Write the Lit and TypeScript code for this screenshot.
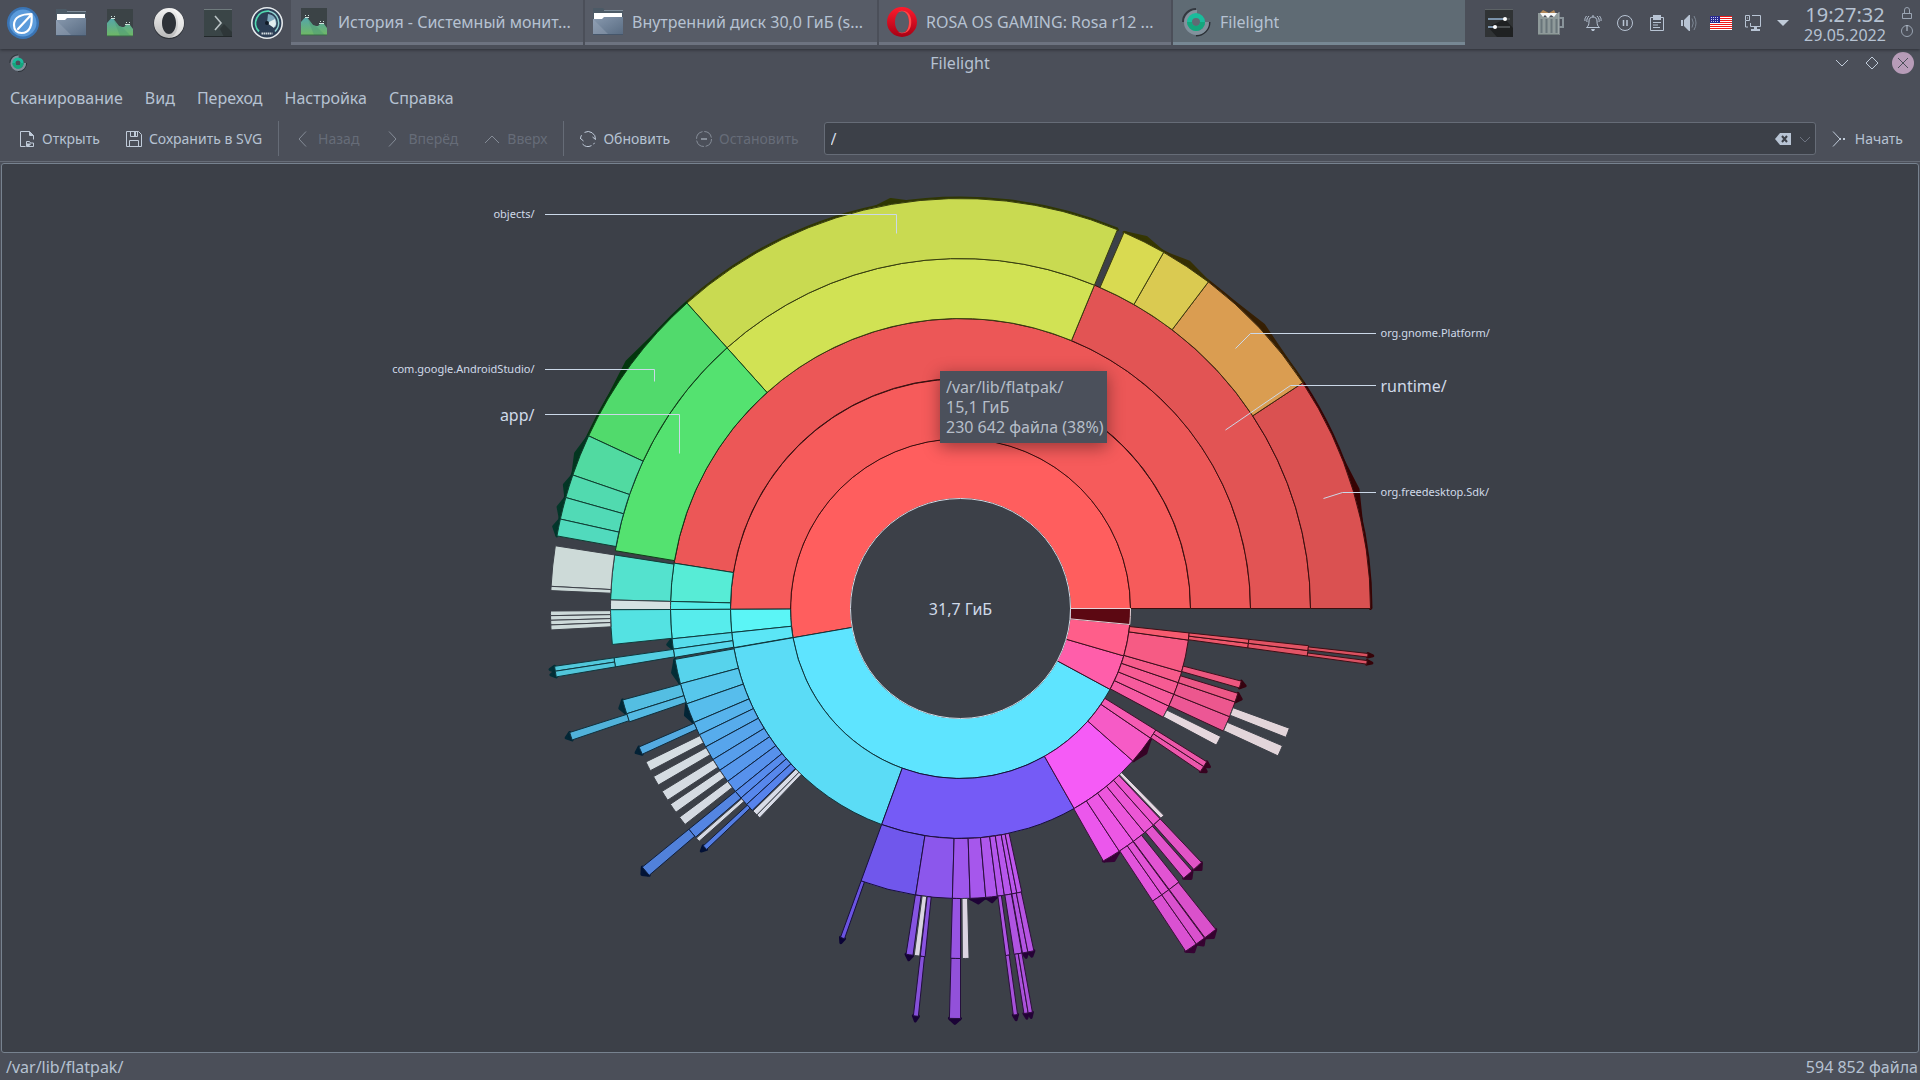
import { LitElement, html, svg, css, type TemplateResult } from "lit";
import { customElement } from "lit/decorators.js";

/* ------------------------------------------------------------------ icons */

const monitorIcon = svg`
  <defs><linearGradient id="hill" x1="0" y1="0" x2="0" y2="1"><stop offset="0" stop-color="#55a5a8"/><stop offset="1" stop-color="#6fb865"/></linearGradient></defs>
  <rect x="3" y="2" width="26" height="27" fill="#3b4346"/>
  <path d="M3 16 6.500 12h3L15 19l3 1h2l2-2h4l3 4v7H3Z" fill="url(#hill)"/>
  <path d="M9.500 12 15 19l3 1 9 9H16Z" fill="#4d9a76" opacity=".5"/>
  <path d="M7 9h1v1H7zM10 9h1v1h-1zM7 11h4v1H7zM22 15h1v1h-1zM25 15h1v1h-1zM21 17h5v1h-5z" fill="#cfe3dc"/>
  <path d="M3 29h26" stroke="#3b6a48"/>`;

const folderIcon = svg`
  <defs><linearGradient id="fold" x1="0" y1="0" x2="1" y2="1"><stop offset="0" stop-color="#8899ae"/><stop offset="1" stop-color="#586b82"/></linearGradient></defs>
  <path d="M1 2h10l2 2h18v10H1Z" fill="#4c5a66"/>
  <path d="M12 4.500h19" stroke="#7e8c99"/>
  <path d="M2 7h28v12H2Z" fill="#fff"/>
  <path d="M1 13h9l2-2h19v18H1Z" fill="url(#fold)"/>
  <path d="M1 13 17 29H1Z" fill="#a3b0c0" opacity=".35"/>
  <path d="M1 28.500h30" stroke="#46566a"/>`;

const ringIcon = svg`
  <path d="M16 3a13 13 0 0 0-13 13" fill="none" stroke="#33383f" stroke-width="2"/>
  <path d="M29 16a13 13 0 0 1-13 13" fill="none" stroke="#2a2f35" stroke-width="3"/>
  <path d="M17 6A10.500 10.500 0 1 0 27 16" fill="none" stroke="#82919c" stroke-width="4"/>
  <circle cx="16" cy="16" r="6.500" fill="none" stroke="#1abc9c" stroke-width="5"/>
  <path d="M9.500 16a6.500 6.500 0 0 0 13 0" fill="none" stroke="#14a67c" stroke-width="5"/>`;

const operaIcon = (outer: string, inner: string, id: string) => svg`
  <defs><linearGradient id=${id} x1="0" y1="0" x2="0" y2="1"><stop offset="0" stop-color=${outer}/><stop offset="1" stop-color=${inner}/></linearGradient></defs>
  <path fill-rule="evenodd" fill="url(#${id})" d="M16 1a15 15 0 1 0 0 30 15 15 0 0 0 0-30Zm0 4c4 0 7 5 7 11s-3 11-7 11-7-5-7-11 3-11 7-11Z"/>`;

const launchers: { name: string; art: TemplateResult }[] = [
  { name: "Меню приложений", art: svg`
      <circle cx="16" cy="16" r="16" fill="#3a74b4"/><circle cx="16" cy="16" r="13.500" fill="#5b9bdb"/>
      <path d="M24.500 7C15 7 7 10 7 18c0 5 3 8 7.500 8C23 26 25.500 18 24.500 7ZM11 22 24 8" fill="none" stroke="#fff" stroke-width="2.200" stroke-linejoin="round" stroke-linecap="round"/>` },
  { name: "Файлы", art: folderIcon },
  { name: "Системный монитор", art: monitorIcon },
  { name: "Opera", art: svg`<circle cx="16" cy="16.500" r="15.500" fill="#2e3238"/>${operaIcon("#f2f2f2", "#b9b9b9", "op-w")}
      <path d="M16 1a15 15 0 0 1 0 30c5-1 9-6 9-15S21 2 16 1Z" fill="#fff" opacity=".45"/>` },
  { name: "Терминал", art: svg`
      <rect x="2" y="2" width="28" height="28" fill="#3a4547"/><path d="M18 22 22 17 30 25v5H22Z" fill="#2a3032" opacity=".7"/>
      <path d="M2 2.500h28" stroke="#6f7b7d"/><path d="M2 29.500h28" stroke="#22282a"/>
      <path d="m13 9 6 7-6 7" fill="none" stroke="#b9c2c4" stroke-width="1.600"/>` },
  { name: "Stacer", art: svg`
      <circle cx="16" cy="16" r="15.200" fill="#2c3e55" stroke="#e6eaec" stroke-width="1.600"/>
      <path d="M8 24.500A12 12 0 0 1 18 4.200" fill="none" stroke="#52d8b0" stroke-width="1.800"/>
      <path d="M18 4.200A12 12 0 0 1 24 24.500" fill="none" stroke="#8fd0d0" stroke-width="1.500"/>
      <path d="M16 16 17 7a9 9 0 0 1 7.500 13Z" fill="#7fa9bd"/><path d="M16 16l8-4 1 5-2 4Z" fill="#e2eef0"/>
      <circle cx="16" cy="16" r="2" fill="#101a26"/><path d="M10.500 26.500h11" stroke="#cfd8dc" stroke-width="1.800" stroke-dasharray="1.500 .5"/>` },
];

const tasks: { title: string; art: TemplateResult; active?: boolean }[] = [
  { title: "История - Системный монит...", art: monitorIcon },
  { title: "Внутренний диск 30,0 ГиБ (s...", art: folderIcon },
  { title: "ROSA OS GAMING: Rosa r12 ...", art: svg`${operaIcon("#ff1b2d", "#a70014", "op-r")}
      <path d="M12 6c3-2 8-2 11 2s3 12 0 16-8 4-11 2c8 3 11-3 11-10S20 3 12 6Z" fill="#ff4b4b"/>` },
  { title: "Filelight", art: ringIcon, active: true },
];

const tray: { name: string; art: TemplateResult }[] = [
  { name: "Уведомления", art: svg`<path d="M1.500 12.500h13c-2-1.500-2.500-3-2.500-6.500C12 3.500 10.500 2 8 2S4 3.500 4 6c0 3.500-.5 5-2.500 6.500ZM8 0v2M2 7c-.5-2 0-4 2-6M14 7c.5-2 0-4-2-6M0 6c-.3-2 0-3 1.500-5M16 6c.3-2 0-3-1.500-5" fill="none" stroke="#b8c4d4"/><path d="M6 14h4l-1 2H7Z" fill="#b8c4d4"/>` },
  { name: "Пауза", art: svg`<circle cx="8" cy="8" r="7.500" fill="none" stroke="#b8c4d4"/><path d="M6.500 5v6M10 5v6" stroke="#b8c4d4" stroke-width="1.500"/>` },
  { name: "Буфер обмена", art: svg`<path d="M1.500 2.500h13v13h-13Z" fill="none" stroke="#b8c4d4"/><path d="M4 0h8v5H4ZM4 7h8v1H4ZM4 9.500h5v1H4ZM4 12h7v1H4Z" fill="#b8c4d4"/>` },
  { name: "Громкость", art: svg`<path d="M0 5h2v6H0ZM3 5l5-5h1v16H8l-5-5Z" fill="#b8c4d4"/><path d="M11 3.500q2.500 4.500 0 9M13 1q4 7 0 14" fill="none" stroke="#7d8794"/>` },
];

const usFlag = svg`
  <rect width="22" height="14" fill="#fff"/>
  <path d="M0 .5h22M0 2.500h22M0 4.500h22M0 6.500h22M0 8.500h22M0 10.500h22M0 12.500h22" stroke="#f01818"/>
  <rect width="10" height="7" fill="#2a2a90"/>
  <path d="M1 1.500h8M1 3.500h8M1 5.500h8" stroke="#c9cdf0" stroke-dasharray="1 1"/>`;

/* ------------------------------------------------------------- disk usage */

/** ring index, start angle, end angle (degrees, counter-clockwise from east), kind */
type Slice = [number, number, number, ("hidden" | "file" | "focus")?];

const slices: Slice[] = [
  // ring 0
  [0, 0, 189.9], [0, 189.9, 331.6], [0, 331.6, 343.8], [0, 343.8, 354.6],
  // ring 1
  [1, 0, 180.2], [1, 180.2, 186], [1, 186, 189.8], [1, 189.9, 249.95], [1, 249.95, 299.6],
  [1, 299.6, 318.5], [1, 318.5, 325.7, "hidden"], [1, 325.7, 328.1],
  [1, 331.8, 334.9], [1, 334.9, 338.1], [1, 338.1, 341.2], [1, 341.2, 344], [1, 344, 352.1], [1, 352.1, 353.9],
  // ring 2
  [2, 0, 171], [2, 171, 178.6], [2, 178.6, 180.2], [2, 180.2, 186], [2, 186, 188.05, "hidden"], [2, 188.05, 189.7],
  [2, 190.1, 195.05, "hidden"], [2, 195.05, 199.2], [2, 199.2, 203.15, "hidden"], [2, 203.15, 205.8],
  [2, 205.8, 208.5], [2, 208.5, 211.4], [2, 211.4, 213.9], [2, 213.9, 216.6], [2, 216.6, 219.1],
  [2, 219.1, 220.8], [2, 220.8, 222.5], [2, 222.5, 224.1], [2, 224.3, 225.4, "file"], [2, 225.4, 226.2, "file"],
  [2, 249.95, 261.1], [2, 261.1, 268.4], [2, 268.4, 271.9], [2, 271.9, 275, "hidden"], [2, 275, 277.3, "hidden"],
  [2, 277.3, 278.7], [2, 278.7, 280.2], [2, 280.2, 281.2], [2, 281.2, 282.2],
  [2, 299.5, 303.2, "hidden"], [2, 303.2, 306.6], [2, 306.6, 309.4], [2, 309.4, 311.7], [2, 311.7, 313.5],
  [2, 313.7, 314.5, "file"], [2, 325.8, 327, "hidden"], [2, 327, 328.1, "hidden"],
  [2, 331.9, 333.8, "file"], [2, 335, 338.1], [2, 338.1, 341.2], [2, 341.2, 343, "hidden"],
  [2, 344.1, 345.5, "hidden"], [2, 352.2, 353.1], [2, 353.1, 353.9],
  // ring 3
  [3, 0, 67.5], [3, 67.5, 131.85], [3, 131.85, 170.5], [3, 171.2, 178.6], [3, 178.6, 180.2, "file"], [3, 180.2, 185.9],
  [3, 188.1, 189.6], [3, 195.15, 197.5, "hidden"], [3, 197.5, 198.9], [3, 203.3, 204.6, "hidden"],
  [3, 206, 207.6, "file"], [3, 208.7, 210.3, "file"], [3, 211.5, 213.2, "file"], [3, 214, 215.6, "file"],
  [3, 216.6, 218.1, "file"], [3, 219.1, 220.8], [3, 221, 221.7, "file"], [3, 222.7, 223.5, "hidden"],
  [3, 249.95, 250.65, "hidden"], [3, 261.05, 262.2, "hidden"], [3, 262.4, 263.3, "file"], [3, 263.4, 264.2],
  [3, 268.4, 270], [3, 270.3, 271.4, "file"], [3, 277.4, 278.1], [3, 278.8, 280.1],
  [3, 280.2, 281.1, "hidden"], [3, 281.1, 282.1, "hidden"], [3, 303.3, 305.1], [3, 305.1, 306.5], [3, 306.6, 308.6],
  [3, 309.6, 311.4, "hidden"], [3, 311.8, 313.5, "hidden"], [3, 335.1, 336.9, "file"], [3, 338.4, 340, "file"],
  [3, 352.2, 353.1], [3, 353.1, 353.9],
  // ring 4
  [4, 0, 33.4, "hidden"], [4, 33.4, 52.8, "hidden"], [4, 52.8, 60.3, "hidden"], [4, 60.3, 66.5, "hidden"],
  [4, 67.5, 131.85, "hidden"], [4, 131.85, 155.1, "hidden"], [4, 155.1, 161, "hidden"], [4, 161, 164.3, "hidden"],
  [4, 164.3, 167.4, "hidden"], [4, 167.4, 169.8, "hidden"], [4, 171.2, 176.9, "file"], [4, 176.9, 177.5, "file"],
  [4, 180.35, 181, "file"], [4, 181, 181.65, "file"], [4, 181.65, 182.3, "file"], [4, 182.3, 183, "file"],
  [4, 188.1, 188.8, "hidden"], [4, 188.8, 189.6, "hidden"], [4, 197.6, 198.7, "hidden"], [4, 219.1, 220.6, "hidden"],
  [4, 263.4, 264.1, "hidden"], [4, 268.45, 270, "hidden"], [4, 277.4, 278, "hidden"], [4, 278.9, 279.5, "hidden"],
  [4, 279.5, 280.1, "hidden"], [4, 303.3, 305.1, "hidden"], [4, 305.1, 306.5, "hidden"], [4, 306.6, 308.5, "hidden"],
  [4, 352.2, 352.7, "hidden"], [4, 353.2, 353.7, "hidden"],
  [0, 354.6, 360, "focus"],
];

const HOLE = 110;
const BAND = 60;
const ringValue = [1, 0.963, 0.926, 0.888, 0.855];

const hsv = (h: number, s: number, v: number): string => {
  const channel = (n: number) => {
    const k = (n + h / 60) % 6;
    return Math.round(255 * (v - v * s * Math.max(0, Math.min(k, 4 - k, 1))));
  };
  return `rgb(${channel(5)},${channel(3)},${channel(1)})`;
};

const polar = (angle: number, radius: number): string => {
  const t = (angle * Math.PI) / 180;
  return `${(radius * Math.cos(t)).toFixed(2)} ${(-radius * Math.sin(t)).toFixed(2)}`;
};

const arcTo = (r: number, from: number, to: number) =>
  `A${r} ${r} 0 ${Math.abs(to - from) > 180 ? 1 : 0} ${to > from ? 0 : 1} ${polar(to, r)}`;

const slicePath = (ring: number, a: number, b: number) => {
  const r = HOLE + ring * BAND;
  const R = r + BAND;
  return `M${polar(a, r)}L${polar(a, R)}${arcTo(R, a, b)}L${polar(b, r)}${arcTo(r, b, a)}Z`;
};

const drawHidden = ([ring, a, b]: Slice) => {
  const R = HOLE + (ring + 1) * BAND;
  const color = hsv(a, 0.95, 0.21);
  return svg`
    <path d="M${polar(a, R)}L${polar((a + b) / 2, R + 5)}L${polar(b, R)}Z" fill=${color} stroke=${color} stroke-width="3" stroke-linejoin="round"/>
    <path d="M${polar(a, R)}${arcTo(R, a, b)}" fill="none" stroke=${color} stroke-width="4"/>`;
};

const drawSlice = ([ring, a, b, kind]: Slice) => {
  const v = ringValue[ring];
  let fill = hsv(a, 0.63, v);
  let stroke = hsv(a, 0.75, 0.24);
  if (kind === "file") {
    fill = hsv(a, 0.06, Math.min(v, 0.9));
    stroke = "#3c4048";
  } else if (kind === "focus") {
    fill = "#5c0812";
    stroke = "#e4d3d8";
  }
  return svg`<path d=${slicePath(ring, a, b)} fill=${fill} stroke=${stroke}/>`;
};

const callouts: { text: string; line: string; x: number; y: number; big?: boolean }[] = [
  { text: "objects/", line: "-415.5,-394 -64,-394 -64,-375", x: -426, y: -391 },
  { text: "com.google.AndroidStudio/", line: "-415.5,-239 -306,-239 -306,-227", x: -426, y: -236 },
  { text: "app/", line: "-415.5,-194 -281,-194 -281,-155", x: -426, y: -188, big: true },
  { text: "org.gnome.Platform/", line: "415.5,-275 290,-275 275,-260", x: 420, y: -272 },
  { text: "runtime/", line: "415.5,-223 330,-223 265,-178.5", x: 420, y: -217, big: true },
  { text: "org.freedesktop.Sdk/", line: "415.5,-116 382,-116 363,-110", x: 420, y: -113 },
];

@customElement("usage-map")
export class UsageMap extends LitElement {
  static styles = css`
    :host { display: block; position: relative; width: 1200px; height: 860px; }
    .map { display: block; width: 1200px; height: 860px; overflow: visible; }
    text { font: 11px "Noto Sans", sans-serif; fill: #d0dae8; }
    .big { font-size: 16px; }
    .total { font-size: 16px; text-anchor: middle; }
    .left { text-anchor: end; }
    .lead { fill: none; stroke: #cbd8e8; }
    .tip {
      position: absolute; left: 580px; top: 193px; width: 167px; box-sizing: border-box;
      padding: 6px 2px 6px 6px; background: #4b505b; color: #b6bec9;
      font: 16px/20px "Noto Sans", sans-serif; box-shadow: 0 4px 16px rgba(0, 0, 0, 0.4);
    }
    .tip p { margin: 0; overflow: hidden; white-space: nowrap; }
  `;

  render() {
    return html`
      <svg class="map" viewBox="-600.5 -430.5 1200 860" role="img" aria-label="/var/lib/flatpak/">
        ${slices.filter((s) => s[3] === "hidden").map(drawHidden)}
        ${slices.map(drawSlice)}
        <circle r=${HOLE} fill="#3c4048" stroke="#d3dbe6"/>
        <path d="M110 0H170" stroke="#e4d3d8"/>
        <text class="total" x="0" y="6">31,7 ГиБ</text>
        ${callouts.map((c) => svg`
          <polyline class="lead" points=${c.line}/>
          <text class="${c.x < 0 ? "left" : ""} ${c.big ? "big" : ""}" x=${c.x} y=${c.y}>${c.text}</text>`)}
      </svg>
      <div class="tip" role="tooltip">
        <p>/var/lib/flatpak/</p>
        <p>15,1 ГиБ</p>
        <p>230 642 файла (38%)</p>
      </div>`;
  }
}

/* ------------------------------------------------------------- the window */

const icon16 = (art: TemplateResult) => html`<svg class="i16" viewBox="0 0 16 16" aria-hidden="true">${art}</svg>`;

const openIcon = svg`<path d="M1.500.5h9l4 4v4M1.500.5v15h5M10.500.5v4h4" fill="none" stroke="#c0cbd9"/><path d="M11 1v3.500h3.500Z" fill="#c0cbd9"/><path d="M7.500 15.500v-5h3l1 1.500h3v3.500ZM7.500 13.500h4" fill="none" stroke="#c0cbd9"/><path d="M8 12.500h4L10 15.500H8Z" fill="#c0cbd9"/>`;
const saveIcon = svg`<path d="M.5.5h12l3 3v12H.5ZM3.500 15.500v-6h9v6M4.500.5v5h7v-5" fill="none" stroke="#c0cbd9"/><path d="M8 1h2v4H8Z" fill="#c0cbd9"/>`;
const backIcon = svg`<path d="M11 .5 4 8l7 7.500" fill="none" stroke="currentColor"/>`;
const forwardIcon = svg`<path d="M4 .5 11 8l-7 7.500" fill="none" stroke="currentColor"/>`;
const upIcon = svg`<path d="M1 12 8 5l7 7" fill="none" stroke="currentColor"/>`;
const refreshIcon = svg`<path d="M4.500 1.400A7.500 7.500 0 0 1 15.500 8.500M15.500 8.500l-3-2.500M1.500 4.200A7.500 7.500 0 0 0 .5 8M.5 7.500l3 2.500M2.500 13A7.500 7.500 0 0 0 11.500 14.600M14.500 11.800l-1 1.500" fill="none" stroke="#c0cbd9"/>`;
const stopIcon = svg`<circle cx="8" cy="8" r="7.500" fill="none" stroke="currentColor" stroke-dasharray="10 1.800"/><path d="M5 8h6" stroke="currentColor" stroke-width="2"/>`;
const goIcon = svg`<path d="M1 .5 8 8l-7 7.500" fill="none" stroke="#c0cbd9"/><path d="M8 7h1v2H8ZM11 7h2v2h-2Z" fill="#c0cbd9"/>`;

@customElement("app-root")
export class AppRoot extends LitElement {
  static styles = css`
    :host {
      display: flex; flex-direction: column; min-height: 100vh; overflow: hidden;
      background: #4b4f59; color: #b6c2d2; font: 16px/20px "Noto Sans", sans-serif;
    }
    button, input { font: inherit; color: inherit; background: none; border: 0; padding: 0; margin: 0; }
    svg { flex: none; display: block; }
    .i16 { width: 16px; height: 16px; overflow: visible; }
    .i32 { width: 32px; height: 32px; }

    .panel { display: flex; height: 49px; box-shadow: 0 1px 3px rgba(30, 33, 39, 0.7); position: relative; }
    .launchers { display: flex; height: 46px; }
    .launcher { display: grid; place-items: center; width: 49px; }
    .launcher:first-child { width: 46px; }
    .tasks { display: flex; flex: 1; gap: 2px; min-width: 0; height: 45px; }
    .task {
      flex: 1 1 0; min-width: 0; display: flex; align-items: center; gap: 8px; padding: 2px 4px 0 7px;
      background: #575c67; border-bottom: 3px solid #6d7380; text-align: left; box-sizing: border-box;
    }
    .task.active { background: #5f6b74; border-color: #778894; }
    .task span { overflow: hidden; text-overflow: ellipsis; white-space: nowrap; }
    .tray { display: flex; height: 46px; padding-left: 8px; }
    .cell { display: grid; place-items: center; width: 32px; }
    .cell.wide { width: 52px; }
    .cell.slim { width: 28px; }
    .flag { width: 22px; height: 14px; }
    .clock { width: 96px; text-align: center; padding-top: 3px; }
    .time { font-size: 20px; line-height: 24px; }
    .date { line-height: 16px; }
    .session { display: flex; flex-direction: column; width: 27px; padding-top: 6px; gap: 4px; align-items: center; }
    .session button { display: block; height: 14px; }
    .i14 { width: 14px; height: 14px; }

    .titlebar { display: grid; grid-template-columns: 1fr auto 1fr; align-items: center; height: 28px; padding: 0 8px; }
    .titlebar h1 { font: inherit; margin: 0; }
    .appicon { width: 20px; height: 20px; }
    .winbtns { display: flex; justify-content: flex-end; align-items: center; gap: 10px; }
    .winbtns button { width: 20px; display: grid; place-items: center; }
    .i22 { width: 22px; height: 22px; }

    .menubar { display: flex; height: 42px; align-items: center; padding-left: 10px; gap: 22px; }

    .toolbar { display: flex; align-items: center; height: 39px; padding: 0 4px 0 6px; font-size: 14px; }
    .tool { display: flex; align-items: center; gap: 7px; padding: 0 13px; height: 34px; white-space: nowrap; }
    .tool:disabled { color: #666c78; }
    .tool:disabled svg { color: #858c97; }
    .sep { width: 1px; height: 35px; margin: 0 3px; background: #666c77; }
    .location {
      flex: 1; display: flex; align-items: center; gap: 9px; height: 33px; box-sizing: border-box; min-width: 0;
      margin: 0 3px 0 12px; padding: 0 5px 0 6px; background: #3c4048; border: 1px solid #666c77; border-radius: 3px;
    }
    .location input { flex: 1; min-width: 0; outline: 0; color: #d3dce8; font-size: 16px; }
    .i10 { width: 10px; height: 10px; }

    .content { flex: 1; display: flex; flex-direction: column; border-top: 1px solid #666c77; margin-top: 3px; padding: 1px 1px 0; }
    .frame {
      flex: 1; display: flex; justify-content: center; align-items: center; background: #3c4048;
      border: 1px solid #77828f; border-radius: 3px;
    }
    .statusbar { display: flex; justify-content: space-between; align-items: center; height: 27px; padding: 0 2px 0 6px; }
  `;

  private tool(art: TemplateResult, label: string, disabled = false) {
    return html`<button class="tool" ?disabled=${disabled}>${icon16(art)}<span>${label}</span></button>`;
  }

  render() {
    return html`
      <header class="panel">
        <nav class="launchers">
          ${launchers.map((l) => html`<button class="launcher" aria-label=${l.name}>
            <svg class="i32" viewBox="0 0 32 32">${l.art}</svg></button>`)}
        </nav>
        <div class="tasks">
          ${tasks.map((t) => html`<button class="task ${t.active ? "active" : ""}">
            <svg class="i32" viewBox="0 0 32 32" aria-hidden="true">${t.art}</svg><span>${t.title}</span></button>`)}
        </div>
        <div class="tray">
          <button class="cell wide" aria-label="Настройки"><svg class="i32" viewBox="0 0 32 32">
            <rect x="2" y="2" width="28" height="28" fill="#303335"/><path d="M2 2.500h28" stroke="#5c6265"/>
            <path d="M5 20 22 12l8 9v9H14Z" fill="#1f2122"/>
            <path d="M5 12h17" stroke="#7b93ab" stroke-width="2"/><path d="M22 12h5M12 20h15" stroke="#4b4f51" stroke-width="2"/>
            <path d="M5 20h7" stroke="#7b93ab" stroke-width="2"/><circle cx="22" cy="12" r="2" fill="#fff"/><circle cx="12" cy="20" r="2" fill="#fff"/></svg></button>
          <button class="cell wide" aria-label="Корзина"><svg class="i32" viewBox="0 0 32 32">
            <path d="M3 6h3l3 4h9l3-4h3v22H3Z" fill="#8f9a9a"/>
            <path d="m5 6 3-3 6 3 5-3 2 4Z" fill="#b38a5b"/><path d="M5 6h17l-3 4-3-2-3 3-3-3-2 2Z" fill="#f6f8f8"/>
            <path d="M6.500 12v14M11.500 12v14M16.500 12v14M21.500 12v14" stroke="#69757a" stroke-width="2"/>
            <path d="M24 5v23" stroke="#aab4b6"/><path d="M24 11h4v9h-4" fill="none" stroke="#89949a" stroke-width="2"/><path d="M3 27.500h21" stroke="#6d7878"/></svg></button>
          ${tray.map((t) => html`<button class="cell" aria-label=${t.name}>${icon16(t.art)}</button>`)}
          <button class="cell" aria-label="Раскладка"><svg class="flag" viewBox="0 0 22 14">${usFlag}</svg></button>
          <button class="cell" aria-label="Сеть">${icon16(svg`<path d="M7 .5h8.500v11H5.500V8M.5.5h4v5h-4ZM2.500 2.500v1M.5 6v6h2.500" fill="none" stroke="#b8c4d4"/><path d="M9 12h3v2h3v2H6v-2h3Z" fill="#b8c4d4"/>`)}</button>
          <button class="cell slim" aria-label="Показать скрытые значки"><svg class="i14" viewBox="0 0 14 14"><path d="M1 4h12L7 10Z" fill="#c0cbd9"/></svg></button>
          <div class="clock"><div class="time">19:27:32</div><div class="date">29.05.2022</div></div>
          <div class="session">
            <button aria-label="Заблокировать"><svg class="i14" viewBox="0 0 14 14"><path d="M2.500 7.500h9v5h-9ZM4.500 7V4a2.500 2.500 0 0 1 5 0v3" fill="none" stroke="#9aa4b2"/></svg></button>
            <button aria-label="Выключить"><svg class="i14" viewBox="0 0 14 14"><circle cx="7" cy="7" r="5.500" fill="none" stroke="#9aa4b2"/><path d="M7 1v6" stroke="#c0cbd9"/></svg></button>
          </div>
        </div>
      </header>

      <div class="titlebar">
        <svg class="appicon" viewBox="0 0 32 32" aria-hidden="true">${ringIcon}</svg>
        <h1>Filelight</h1>
        <div class="winbtns">
          <button aria-label="Свернуть"><svg class="i14" viewBox="0 0 14 14"><path d="m1 4 6 6 6-6" fill="none" stroke="#c0cbd9"/></svg></button>
          <button aria-label="Развернуть"><svg class="i14" viewBox="0 0 14 14"><path d="m7 1 6 6-6 6-6-6Z" fill="none" stroke="#c0cbd9"/></svg></button>
          <button aria-label="Закрыть"><svg class="i22" viewBox="0 0 22 22"><circle cx="11" cy="11" r="11" fill="#b79cb8"/><path d="m6 6 10 10M16 6 6 16" stroke="#4b4f59"/></svg></button>
        </div>
      </div>

      <nav class="menubar">
        ${["Сканирование", "Вид", "Переход", "Настройка", "Справка"].map((m) => html`<button>${m}</button>`)}
      </nav>

      <div class="toolbar">
        ${this.tool(openIcon, "Открыть")} ${this.tool(saveIcon, "Сохранить в SVG")}
        <span class="sep"></span>
        ${this.tool(backIcon, "Назад", true)} ${this.tool(forwardIcon, "Вперёд", true)} ${this.tool(upIcon, "Вверх", true)}
        <span class="sep"></span>
        ${this.tool(refreshIcon, "Обновить")} ${this.tool(stopIcon, "Остановить", true)}
        <div class="location">
          <input type="text" aria-label="Адрес" .value=${"/"}>
          <button aria-label="Очистить"><svg class="i16" viewBox="0 0 16 16"><path d="M5 2h11v12H5L0 8Z" fill="#b8c4d4"/><path d="m7 5 5 6M12 5l-5 6" stroke="#3c4048" stroke-width="2"/></svg></button>
          <button aria-label="Список адресов"><svg class="i10" viewBox="0 0 10 10"><path d="m0 3 5 5 5-5" fill="none" stroke="#6d7380"/></svg></button>
        </div>
        ${this.tool(goIcon, "Начать")}
      </div>

      <main class="content"><div class="frame"><usage-map></usage-map></div></main>

      <footer class="statusbar"><span>/var/lib/flatpak/</span><span>594 852 файла</span></footer>`;
  }
}
